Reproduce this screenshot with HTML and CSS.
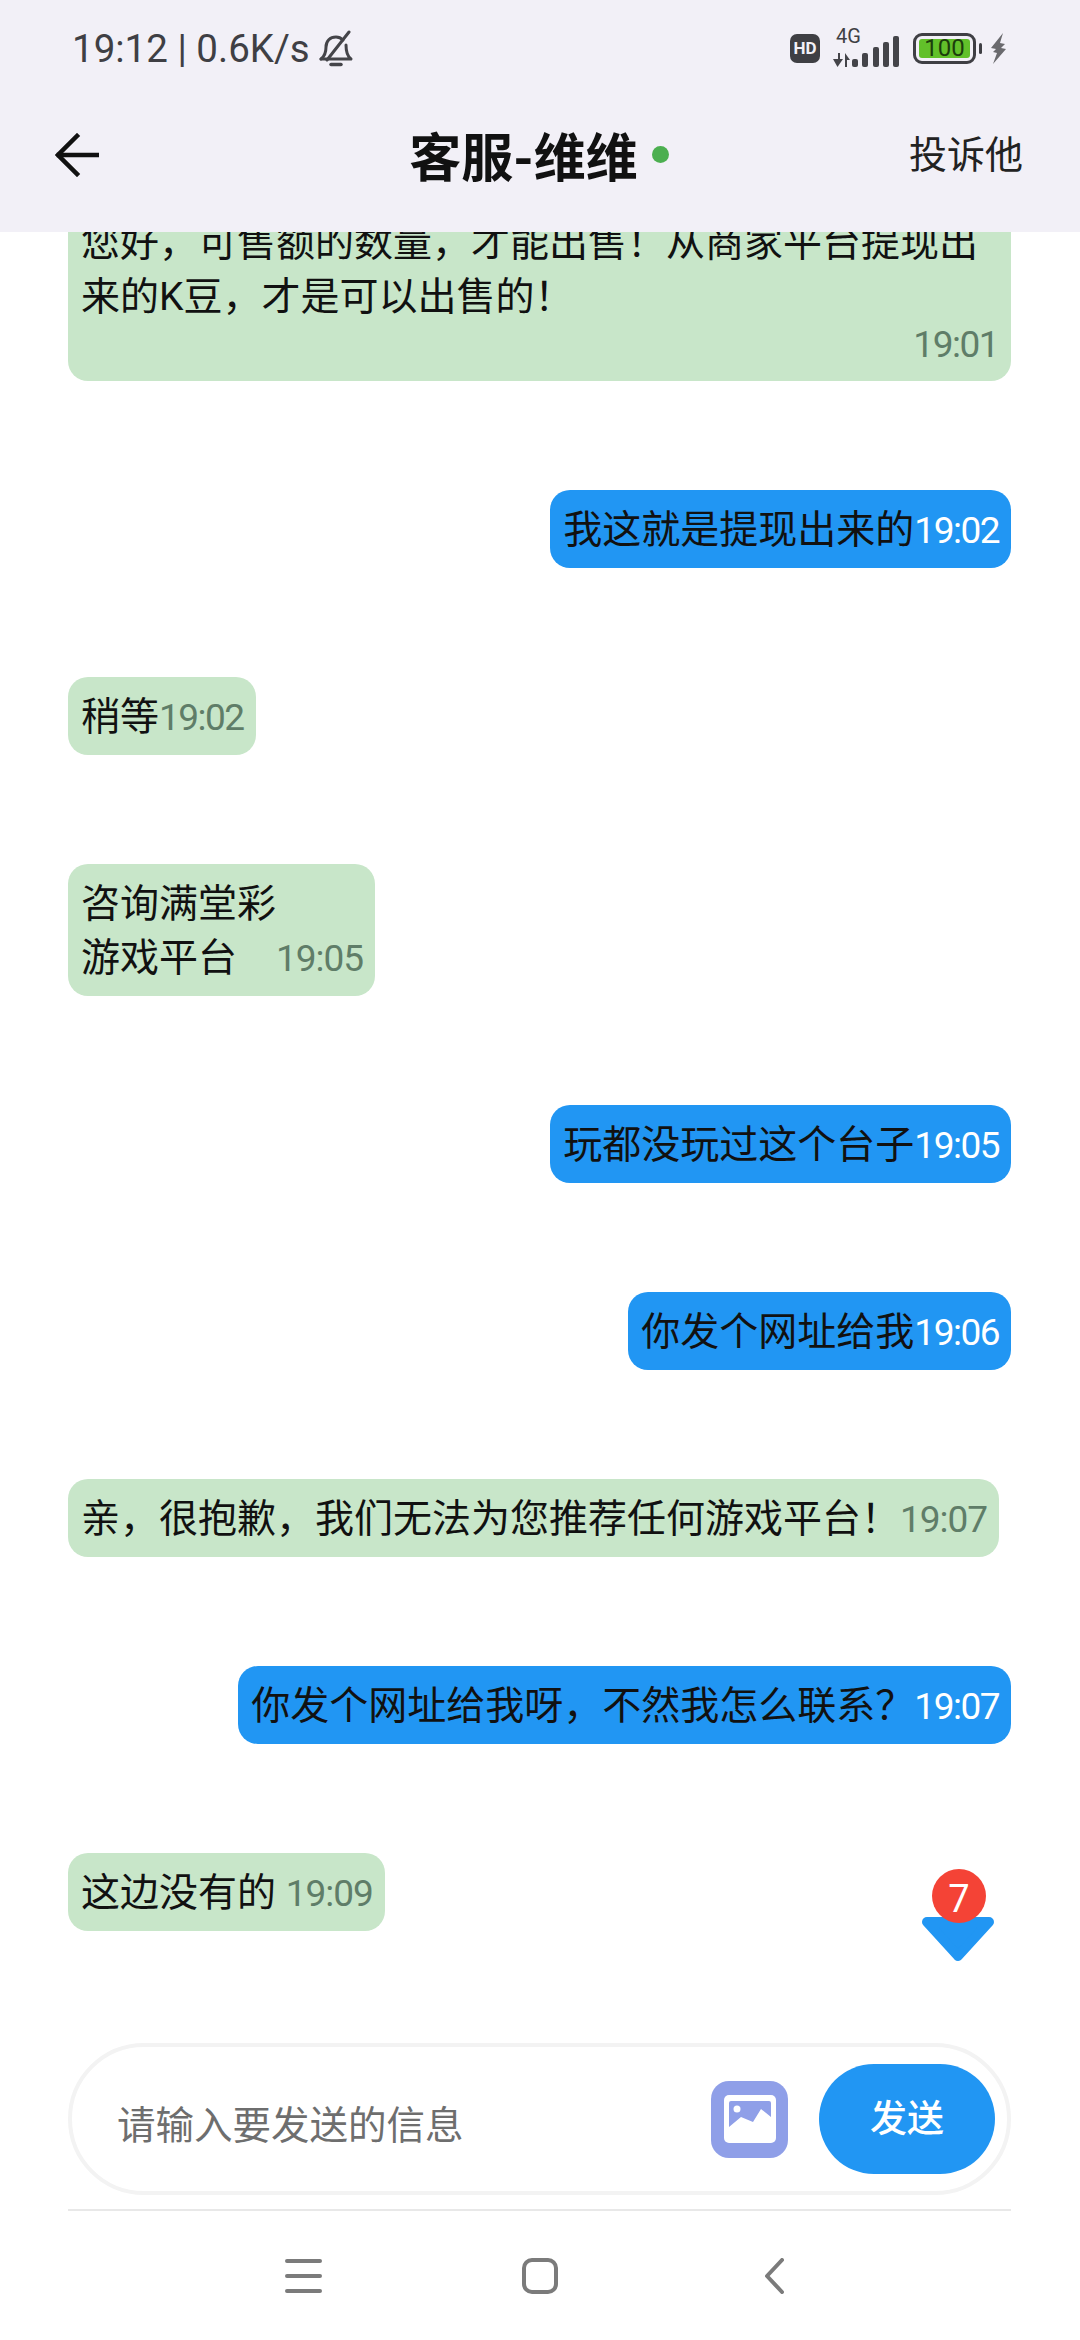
FILE: index.html
```html
<!DOCTYPE html>
<html lang="zh-CN">
<head>
    <meta charset="UTF-8">
    <meta name="viewport" content="width=device-width, initial-scale=1.0">
    <title>客服-维维</title>
    <link rel="stylesheet" href="styles.css">
</head>
<body>
    <header class="top">
        <!-- Status bar -->
        <div class="status-bar">
            <div class="status-left">
                <span>19:12 | 0.6K/s</span>
                <svg class="bell" width="36" height="38" viewBox="0 0 36 38" fill="none" stroke="#444449" stroke-width="3" stroke-linecap="round" stroke-linejoin="round">
                    <path d="M3 29c4-3 5-6 5-12 0-6 4-10 10-10 3 0 5 1 7 3"/>
                    <path d="M28 15c0 7 1 11 5 14H3"/>
                    <path d="M9 30L31 2"/>
                    <path d="M13 34.500h10" stroke-width="3.500"/>
                </svg>
            </div>
            <div class="status-right">
                <span class="hd">HD</span>
                <div class="signal">
                    <span class="net">4G</span>
                    <svg width="67" height="32" viewBox="0 0 67 32" fill="#444449">
                        <path d="M1 23h5v-6h2v6h3l-5.500 8zM13 17l5 7h-3v7h-2z"/>
                        <rect x="20" y="23" width="6" height="8" rx="2"/>
                        <rect x="30" y="17" width="6" height="14" rx="2"/>
                        <rect x="41" y="11" width="6" height="20" rx="2"/>
                        <rect x="51" y="6" width="6" height="25" rx="2"/>
                        <rect x="61" y="0" width="6" height="31" rx="2"/>
                    </svg>
                </div>
                <div class="battery">
                    <div class="battery-body"><span class="battery-fill">100</span></div>
                    <span class="battery-tip"></span>
                </div>
                <svg class="bolt" width="18" height="31" viewBox="0 0 18 31" fill="#6a6a6e">
                    <path d="M13 0L1 15l5 1-3 3 4 1-4 11 13-15-5-1 4-4-5-1z"/>
                </svg>
            </div>
        </div>

        <!-- Title bar -->
        <nav class="title-bar">
            <div class="back">
                <svg width="44" height="44" viewBox="0 0 44 44" fill="none" stroke="#111" stroke-width="4.500" stroke-linecap="square">
                    <path d="M43 22H4"/>
                    <path d="M22 3L3 22l19 19"/>
                </svg>
            </div>
            <h1 class="title">客服-维维<span class="online-dot"></span></h1>
            <div class="report">投诉他</div>
        </nav>
    </header>

    <main class="chat">
        <div class="msg msg-left">您好，可售额的数量，才能出售！从商家平台提现出来的K豆，才是可以出售的！<span class="time time-block">19:01</span></div>
        <div class="msg msg-right">我这就是提现出来的<span class="time">19:02</span></div>
        <div class="msg msg-left">稍等<span class="time">19:02</span></div>
        <div class="msg msg-left">咨询满堂彩<br>游戏平台　<span class="time time-wide">19:05</span></div>
        <div class="msg msg-right">玩都没玩过这个台子<span class="time">19:05</span></div>
        <div class="msg msg-right">你发个网址给我<span class="time">19:06</span></div>
        <div class="msg msg-left">亲，很抱歉，我们无法为您推荐任何游戏平台！<span class="time time-wide">19:07</span></div>
        <div class="msg msg-right">你发个网址给我呀，不然我怎么联系？<span class="time">19:07</span></div>
        <div class="msg msg-left">这边没有的 <span class="time time-wide">19:09</span></div>

        <!-- Jump to newest -->
        <div class="jump">
            <svg width="74" height="46" viewBox="0 0 74 46" fill="#2196f3" stroke="#2196f3" stroke-width="10" stroke-linejoin="round">
                <path d="M6 6h62L37 40z"/>
            </svg>
            <span class="jump-count">7</span>
        </div>
    </main>

    <footer class="bottom">
        <div class="composer">
            <div class="placeholder">请输入要发送的信息</div>
            <div class="pick-image">
                <svg width="52" height="48" viewBox="0 0 52 48">
                    <rect width="52" height="48" rx="5" fill="#fff"/>
                    <path d="M5 32V8q0-2 2-2h38q2 0 2 2v14l-10-8-8 13-12-5z" fill="#8f9fe8"/>
                    <circle cx="13" cy="14" r="3.500" fill="#fff"/>
                </svg>
            </div>
            <button class="send">发送</button>
        </div>
        <div class="sys-nav">
            <svg width="37" height="36" viewBox="0 0 37 36" stroke="#7b7b7b" stroke-width="4" stroke-linecap="round">
                <path d="M2 3h33M2 18h33M2 33h33"/>
            </svg>
            <svg width="36" height="36" viewBox="0 0 36 36" fill="none" stroke="#7b7b7b" stroke-width="4">
                <rect x="2" y="2" width="32" height="32" rx="8"/>
            </svg>
            <svg class="sys-back" width="19" height="36" viewBox="0 0 19 36" fill="none" stroke="#7b7b7b" stroke-width="4" stroke-linecap="round" stroke-linejoin="round">
                <path d="M17 2L2 18l15 16"/>
            </svg>
        </div>
    </footer>
</body>
</html>
```

FILE: styles.css
```css
* {
    margin: 0;
    padding: 0;
    box-sizing: border-box;
}
body {
    width: 1080px;
    height: 2340px;
    display: flex;
    flex-direction: column;
    overflow: hidden;
    background-color: #fff;
    color: #111;
    font-family: Roboto, "Noto Sans CJK SC", sans-serif;
}

/* Header */
.top {
    height: 232px;
    flex-shrink: 0;
    background-color: #f2f0f7;
}
.status-bar {
    height: 97px;
    padding: 0 72px;
    display: flex;
    justify-content: space-between;
    align-items: center;
    color: #3f3f44;
    font-size: 38.500px;
}
.status-left {
    display: flex;
    align-items: center;
    gap: 8px;
}
.status-right {
    display: flex;
    align-items: center;
}
.hd {
    width: 30px;
    height: 29px;
    border-radius: 7px;
    background-color: #3f3f44;
    color: #f2f0f7;
    font-size: 17px;
    font-weight: 700;
    line-height: 29px;
    text-align: center;
}
.signal {
    position: relative;
    margin-left: 12px;
    height: 33px;
}
.net {
    position: absolute;
    left: 4px;
    top: -7px;
    font-size: 20px;
    line-height: 22px;
}
.battery {
    display: flex;
    align-items: center;
    margin-left: 14px;
}
.battery-body {
    width: 63px;
    height: 31px;
    padding: 3px;
    border: 3px solid #3f3f44;
    border-radius: 9px;
}
.battery-fill {
    display: block;
    height: 100%;
    border-radius: 3px;
    background-color: #62c02a;
    color: #1c3d0c;
    font-size: 24px;
    line-height: 19px;
    text-align: center;
}
.battery-tip {
    width: 3px;
    height: 11px;
    margin-left: 3px;
    border-radius: 2px;
    background-color: #3f3f44;
}
.bolt {
    margin-left: 8px;
}
.title-bar {
    height: 135px;
    padding: 0 57px 20px 60px;
    display: flex;
    align-items: center;
}
.back,
.report {
    flex: 1;
}
.back {
    margin-left: -5px;
}
.back svg {
    display: block;
}
.title {
    display: flex;
    align-items: center;
    font-size: 52px;
    font-weight: 700;
    color: #111;
}
.online-dot {
    width: 17px;
    height: 17px;
    margin-left: 14px;
    border-radius: 50%;
    background-color: #4caf50;
}
.report {
    text-align: right;
    font-size: 38px;
    line-height: 50px;
    color: #222;
}

/* Messages */
.chat {
    position: relative;
    flex: 1;
    min-height: 0;
    padding: 0 69px 112px 68px;
    display: flex;
    flex-direction: column;
    justify-content: flex-end;
    gap: 109px;
    overflow: hidden;
}
.msg {
    flex-shrink: 0;
    max-width: 943px;
    padding: 13px 12px 11px 13px;
    border-radius: 20px;
    font-size: 39px;
    line-height: 54px;
}
.msg-left {
    align-self: flex-start;
    background-color: #c8e6c9;
}
.msg-right {
    align-self: flex-end;
    background-color: #2196f3;
}
.time {
    font-size: 37px;
    line-height: 1;
    letter-spacing: -1.500px;
    color: #5f7d68;
}
.time-wide {
    letter-spacing: -1px;
}
.msg-right .time {
    color: #fff;
}
.time-block {
    display: block;
    margin-top: -6px;
    margin-bottom: -2px;
    padding-right: 1px;
    line-height: 54px;
    text-align: right;
}

/* Unread jump button */
.jump {
    position: absolute;
    left: 921px;
    bottom: 81px;
    width: 74px;
    height: 46px;
}
.jump svg {
    display: block;
}
.jump-count {
    position: absolute;
    left: 11px;
    top: -47px;
    width: 54px;
    height: 54px;
    border-radius: 50%;
    background-color: #f44336;
    color: #fff;
    font-size: 38px;
    line-height: 60px;
    text-align: center;
}

/* Input area */
.bottom {
    flex-shrink: 0;
    height: 297px;
}
.composer {
    width: 943px;
    height: 152px;
    margin-left: 68px;
    padding: 0 12px 0 45px;
    display: flex;
    align-items: center;
    border: 4px solid #f3f3f3;
    border-radius: 76px;
}
.placeholder {
    flex: 1;
    padding-top: 5px;
    font-size: 38.500px;
    color: #6e6e6e;
}
.pick-image {
    width: 77px;
    height: 77px;
    margin-right: 31px;
    border-radius: 18px;
    background-color: #8f9fe8;
    display: flex;
    align-items: center;
    justify-content: center;
}
.send {
    width: 176px;
    height: 110px;
    padding-bottom: 6px;
    border: none;
    border-radius: 55px;
    background-color: #2196f3;
    color: #fff;
    font-family: inherit;
    font-size: 37px;
    font-weight: 500;
}
.sys-nav {
    height: 131px;
    margin: 14px 69px 0 68px;
    padding-left: 217px;
    display: flex;
    align-items: center;
    gap: 200px;
    border-top: 2px solid #e8e8e8;
}
.sys-back {
    margin-left: 7px;
}
```
